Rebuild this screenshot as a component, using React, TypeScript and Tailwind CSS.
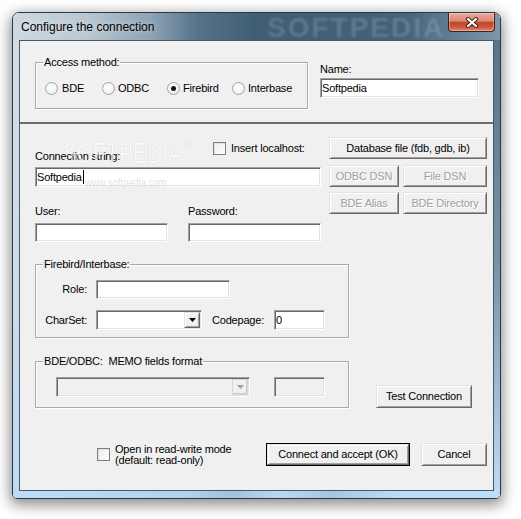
import React from "react";

const sunken =
  "border border-t-[#a0a0a0] border-l-[#a0a0a0] border-b-white border-r-white shadow-[inset_1px_1px_0_#696969,inset_-1px_-1px_0_#e3e3e3]";
const raised =
  "border border-t-[#e3e3e3] border-l-[#e3e3e3] border-b-[#696969] border-r-[#696969] shadow-[inset_1px_1px_0_#ffffff,inset_-1px_-1px_0_#a0a0a0] bg-[#f0f0f0]";

function Edit({
  className = "",
  value = "",
  disabled = false,
  caret = false,
}: {
  className?: string;
  value?: string;
  disabled?: boolean;
  caret?: boolean;
}) {
  return (
    <div
      className={`${className} ${sunken} ${
        disabled ? "bg-[#f0f0f0]" : "bg-white"
      } flex items-center pl-[1px] overflow-hidden shrink-0`}
    >
      <span className="leading-[13px] whitespace-nowrap">{value}</span>
      {caret && <span className="w-px h-[14px] bg-black ml-px" />}
    </div>
  );
}

function Combo({ className = "", disabled = false }: { className?: string; disabled?: boolean }) {
  return (
    <div
      className={`${className} ${sunken} ${
        disabled ? "bg-[#f0f0f0]" : "bg-white"
      } p-[1px] flex justify-end shrink-0`}
    >
      <div
        className={`w-[16px] h-full ${
          disabled
            ? "border border-[#d6d6d6] bg-[#f0f0f0] shadow-[inset_-1px_-1px_0_#c8c8c8]"
            : raised
        } flex items-center justify-center`}
      >
        <svg width="7" height="4" viewBox="0 0 7 4">
          <path d="M0 0H7L3.5 4Z" fill={disabled ? "#a0a0a0" : "#000"} />
        </svg>
      </div>
    </div>
  );
}

function Btn({
  className = "",
  disabled = false,
  children,
}: {
  className?: string;
  disabled?: boolean;
  children: React.ReactNode;
}) {
  return (
    <div
      className={`${className} ${raised} flex items-center justify-center whitespace-nowrap leading-[13px] shrink-0 ${
        disabled ? "text-[#a0a0a0] [text-shadow:1px_1px_0_#ffffff]" : "text-black"
      }`}
    >
      {children}
    </div>
  );
}

function Group({
  label,
  className = "",
  children,
}: {
  label: string;
  className?: string;
  children: React.ReactNode;
}) {
  return (
    <div
      className={`${className} border border-[#a9a9a9] shadow-[inset_1px_1px_0_#ffffff,1px_1px_0_#ffffff] flex flex-col shrink-0`}
    >
      <span className="-mt-[7px] ml-[7px] px-[1px] self-start bg-[#f0f0f0] leading-[13px] h-[13px] whitespace-pre">
        {label}
      </span>
      {children}
    </div>
  );
}

function Radio({ checked = false }: { checked?: boolean }) {
  return (
    <span className="w-[13px] h-[13px] rounded-full border border-[#a3a3a3] bg-[radial-gradient(circle_at_45%_40%,#ffffff_0%,#f6f6f6_50%,#dcdcdc_100%)] flex items-center justify-center shrink-0">
      {checked && <span className="w-[5px] h-[5px] rounded-full bg-[#141414]" />}
    </span>
  );
}

function Check() {
  return (
    <span className="w-[13px] h-[13px] border border-[#7e7e7e] bg-[linear-gradient(135deg,#ececec,#ffffff)] shadow-[inset_1px_1px_0_#e2e2e2] shrink-0" />
  );
}

export default function App() {
  return (
    <div className="w-[521px] h-[519px] bg-white pt-[12px] pl-[12px] overflow-hidden font-['Liberation_Sans',Arial,sans-serif] text-[11px] tracking-[-0.2px] text-black">
      <div className="relative w-[489px] h-[487px] flex flex-col rounded-t-[7px] rounded-b-[5px] border border-[#2e3843] overflow-hidden shadow-[0_4px_14px_2px_rgba(0,0,0,0.45)]">
        {/* Title bar */}
        <div className="relative h-[27px] shrink-0 flex items-start justify-between bg-[linear-gradient(90deg,#cfd8df_0%,#bac7d1_15%,#8ea4b5_28%,#557288_38%,#3f5d73_50%,#44627a_80%,#7e97aa_100%)]">
          <span className="relative z-10 ml-[8px] mt-[7px] text-[12px] tracking-normal leading-[14px] [text-shadow:0_0_6px_rgba(255,255,255,0.7)]">
            Configure the connection
          </span>
          <span className="absolute left-[254px] top-0 text-[28px] font-bold tracking-[2px] leading-[30px] text-[#b4c6d4] opacity-25 blur-[1px]">
            SOFTPEDIA
          </span>
          <div className="relative z-10 w-[47px] h-[19px] mr-[5px] rounded-b-[4px] border border-t-0 border-[#4d1c14] bg-[linear-gradient(180deg,#e9a99b_0%,#d98a78_45%,#c4432c_52%,#c9533c_75%,#e08a72_100%)] shadow-[inset_0_0_0_1px_rgba(255,255,255,0.3)] flex items-center justify-center">
            <svg width="14" height="11" viewBox="0 0 14 11">
              <path d="M3 2L11 9M11 2L3 9" stroke="#4a2520" strokeWidth="4.2" strokeLinecap="round" />
              <path d="M3 2L11 9M11 2L3 9" stroke="#ffffff" strokeWidth="2.2" strokeLinecap="round" />
            </svg>
          </div>
        </div>

        {/* Body */}
        <div className="flex flex-1">
          <div className="w-[6px] bg-[linear-gradient(180deg,#d3dce3_0%,#cfdbe6_50%,#bcdaf5_100%)]" />
          <div className="w-[475px] border border-[#45576a] bg-[#f0f0f0] flex flex-col">
            {/* Top panel */}
            <div className="h-[81px] shrink-0 flex items-start pl-[15px]">
              <Group label="Access method:" className="mt-[21px] w-[273px] h-[47px]">
                <div className="flex items-center h-[13px] mt-[13px] pl-[9px]">
                  <div className="w-[57px] flex items-center">
                    <Radio />
                    <span className="ml-[4px] leading-[13px]">BDE</span>
                  </div>
                  <div className="w-[65px] flex items-center">
                    <Radio />
                    <span className="ml-[3px] leading-[13px]">ODBC</span>
                  </div>
                  <div className="w-[65px] flex items-center">
                    <Radio checked />
                    <span className="ml-[3px] leading-[13px]">Firebird</span>
                  </div>
                  <div className="flex items-center">
                    <Radio />
                    <span className="ml-[3px] leading-[13px]">Interbase</span>
                  </div>
                </div>
              </Group>
              <div className="ml-[12px] mt-[22px] flex flex-col">
                <span className="leading-[13px]">Name:</span>
                <Edit className="mt-[2px] w-[159px] h-[20px]" value="Softpedia" />
              </div>
            </div>

            <div className="h-[2px] shrink-0 bg-[#6b6b6b]" />

            {/* Lower panel */}
            <div className="relative flex-1 flex flex-col pl-[15px]">
              <div className="flex items-start">
                <div className="w-[286px] pt-[18px] flex flex-col">
                  <div className="flex items-start">
                    <span className="w-[178px] mt-[8px] leading-[13px]">Connection string:</span>
                    <div className="flex items-center h-[13px]">
                      <Check />
                      <span className="ml-[5px] leading-[13px] whitespace-nowrap">Insert localhost:</span>
                    </div>
                  </div>
                  <Edit className="mt-[4px] w-[286px] h-[20px]" value="Softpedia" caret />
                  <div className="flex mt-[18px]">
                    <span className="w-[153px] leading-[13px]">User:</span>
                    <span className="leading-[13px]">Password:</span>
                  </div>
                  <div className="flex mt-[5px] gap-[20px]">
                    <Edit className="w-[133px] h-[19px]" />
                    <Edit className="w-[133px] h-[19px]" />
                  </div>
                </div>
                <div className="ml-[8px] pt-[13px] w-[158px] flex flex-col">
                  <Btn className="h-[22px] w-full">Database file (fdb, gdb, ib)</Btn>
                  <div className="flex gap-[4px] mt-[6px]">
                    <Btn disabled className="h-[22px] w-[70px]">
                      ODBC DSN
                    </Btn>
                    <Btn disabled className="h-[22px] w-[84px]">
                      File DSN
                    </Btn>
                  </div>
                  <div className="flex gap-[4px] mt-[5px]">
                    <Btn disabled className="h-[22px] w-[70px]">
                      BDE Alias
                    </Btn>
                    <Btn disabled className="h-[22px] w-[84px]">
                      BDE Directory
                    </Btn>
                  </div>
                </div>
              </div>

              <Group label="Firebird/Interbase:" className="mt-[22px] w-[314px] h-[74px]">
                <div className="flex items-center mt-[9px] pl-[8px]">
                  <span className="w-[43px] text-right leading-[13px]">Role:</span>
                  <Edit className="ml-[9px] w-[134px] h-[19px]" />
                </div>
                <div className="flex items-center mt-[11px] pl-[8px]">
                  <span className="w-[43px] flex justify-end whitespace-nowrap leading-[13px]">CharSet:</span>
                  <Combo className="ml-[9px] w-[106px] h-[20px]" />
                  <span className="ml-[10px] w-[62px] leading-[13px]">Codepage:</span>
                  <Edit className="w-[51px] h-[20px]" value="0" />
                </div>
              </Group>

              <div className="flex items-end mt-[23px]">
                <Group label="BDE/ODBC:  MEMO fields format" className="w-[314px] h-[47px]">
                  <div className="flex mt-[9px] pl-[20px]">
                    <Combo disabled className="w-[194px] h-[20px]" />
                    <Edit disabled className="ml-[24px] w-[51px] h-[20px]" />
                  </div>
                </Group>
                <Btn className="ml-[27px] w-[96px] h-[23px]">Test Connection</Btn>
              </div>

              <div className="flex items-center mt-[35px] h-[23px]">
                <div className="w-[231px] pl-[62px] flex items-center">
                  <Check />
                  <span className="ml-[5px] leading-[11px]">
                    Open in read-write mode
                    <br />
                    (default: read-only)
                  </span>
                </div>
                <div className="w-[144px] h-[23px] border border-black shrink-0">
                  <Btn className="w-full h-full">Connect and accept (OK)</Btn>
                </div>
                <Btn className="ml-[11px] w-[66px] h-[23px]">Cancel</Btn>
              </div>

              {/* watermark overlay */}
              <div className="absolute left-[43px] top-[14px] pointer-events-none z-10 flex items-start origin-left scale-x-[0.7]">
                <span className="text-[30px] leading-[30px] tracking-normal text-[#fbfbfb] opacity-70 [text-shadow:0_0_1px_rgba(0,0,0,0.3)]">
                  SOFTPEDIA
                </span>
                <span className="text-[10px] leading-[10px] text-[#e8e8e8] ml-[2px] mt-[3px]">™</span>
              </div>
              <span className="absolute left-[65px] top-[53px] pointer-events-none z-10 origin-left scale-x-[0.79] text-[12px] leading-[12px] tracking-normal text-[#d6d6d6] opacity-70">
                www.softpedia.com
              </span>
            </div>
          </div>
          <div className="w-[6px] bg-[linear-gradient(180deg,#56758b_0%,#7793a8_50%,#a8c6e2_85%,#bcdaf5_100%)]" />
        </div>
        <div className="h-[7px] shrink-0 bg-[linear-gradient(90deg,#bddcf8_0%,#b3d2ee_35%,#a2c1dd_45%,#bad8f3_55%,#a6c5e1_65%,#bddcf8_80%)]" />
      </div>
    </div>
  );
}
